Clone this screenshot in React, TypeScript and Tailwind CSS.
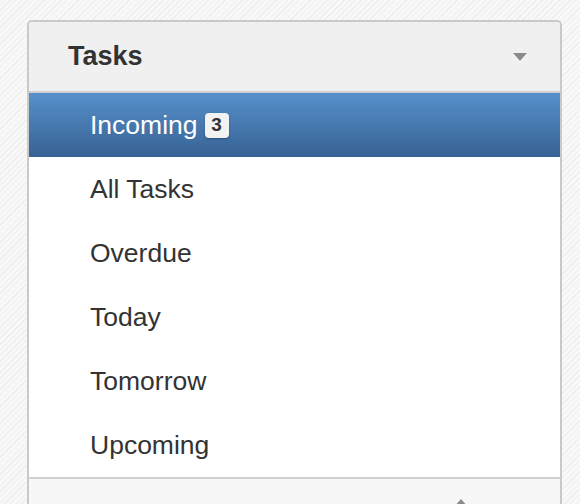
const items = ['All Tasks', 'Overdue', 'Today', 'Tomorrow', 'Upcoming']

export default function App() {
  return (
    <div className="min-h-[504px] h-[504px] overflow-hidden bg-[#f6f6f6] bg-[repeating-linear-gradient(135deg,#f8f8f8_0px,#f8f8f8_3px,#eeeeee_3px,#eeeeee_4px)] pt-[20px] pl-[27px] font-['Liberation_Sans',Arial,sans-serif] text-[#333]">
      <div className="w-[535px] border-2 border-[#c9c9c9] rounded-t-[5px] bg-white">
        {/* Header */}
        <div className="h-[71px] flex items-center justify-between pl-[39px] pr-[33px] bg-[#f0f0f0] rounded-t-[4px] border-b-2 border-[#d0d0d0]">
          <span className="text-[27px] font-bold leading-none">Tasks</span>
          <span className="w-0 h-0 border-l-[7px] border-r-[7px] border-t-[8px] border-l-transparent border-r-transparent border-t-[#8a8a8a] drop-shadow-[0_1px_0_#ffffff]" />
        </div>

        {/* Selected */}
        <div className="h-[64px] flex items-center pl-[61px] pt-[1px] bg-gradient-to-b from-[#5690cb] to-[#376294] text-white">
          <span className="text-[26.5px] leading-none">Incoming</span>
          <span className="ml-[7px] w-[24px] h-[25px] flex items-center justify-center rounded-[4px] bg-[#f2f2f2] text-[#333] text-[19px] font-bold shadow-[0_1px_2px_rgba(0,0,0,0.3)]">
            3
          </span>
        </div>

        {items.map((label) => (
          <div key={label} className="h-[64px] flex items-center pl-[61px] pt-[1px] bg-white">
            <span className="text-[26.5px] leading-none">{label}</span>
          </div>
        ))}

        {/* Next section */}
        <div className="h-[40px] border-t-2 border-[#cfcfcf] bg-[#f7f7f7] flex justify-end pt-[20px] pr-[92px]">
          <span className="w-0 h-0 border-l-[7px] border-r-[7px] border-b-[8px] border-l-transparent border-r-transparent border-b-[#8a8a8a]" />
        </div>
      </div>
    </div>
  )
}
